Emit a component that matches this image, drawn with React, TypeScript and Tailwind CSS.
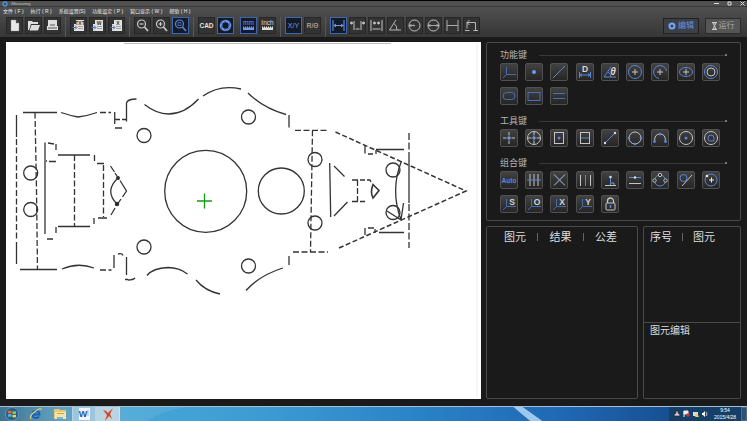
import type { ReactNode } from 'react'
import clsx from 'clsx'

interface Tool {
  label: string
  icon: ReactNode
  active?: boolean
}

const BLUE = '#5b86d6'
const LIGHT = '#c4c4c4'

const menus = ['文件 ( F )', '执行 ( R )', '系统设置(S)', '功能设定 ( P )', '窗口显示 ( W )', '帮助 ( H )']

function Magnifier({ color, children }: { color: string; children?: ReactNode }) {
  return (
    <g fill="none" stroke={color} strokeWidth="1.2">
      <circle cx="7.5" cy="7" r="4" />
      <path d="M10.5 10l3.5 4" strokeWidth="1.7" />
      {children}
    </g>
  )
}

function ExportSheet({ text }: { text: string }) {
  return (
    <>
      <path d="M6 3h8v11H4V7h2z" fill="#e2e2e2" />
      <path d="M8 9.500h5M8 11.500h5" stroke="#888" strokeWidth=".7" />
      <path d="M2.500 10.500h4M5 8.500l2 2-2 2" stroke="#4a76bd" fill="none" />
      <text x="10" y="7.500" fontSize="5" fontWeight="700" textAnchor="middle" fill="#333">{text}</text>
    </>
  )
}

const fileTools: Tool[] = [
  { label: 'New', icon: <path d="M5 3h5l3 3v8H5zM10 3v3h3" fill="#e8e8e8" stroke="#888" strokeWidth=".4" /> },
  { label: 'Open', icon: <path d="M3 13V4h4l1 1h5v2H6l-2 6zM6.500 8H15l-2 5.500H4.500z" fill="#dedede" /> },
  {
    label: 'Save',
    icon: (
      <>
        <path d="M4 3h9v6h1v4H3V9h1z" fill="#dedede" />
        <path d="M6 8h5M4 11h9" stroke="#555" />
      </>
    ),
  },
]

const exportTools: Tool[] = [
  { label: 'Export TXT', icon: <ExportSheet text="TXT" /> },
  { label: 'Export Word', icon: <ExportSheet text="W" /> },
  { label: 'Export Excel', icon: <ExportSheet text="X" /> },
]

const zoomTools: Tool[] = [
  { label: 'Zoom out', icon: <Magnifier color="#c9c9c9"><path d="M5.500 7h4" /></Magnifier> },
  { label: 'Zoom in', icon: <Magnifier color="#c9c9c9"><path d="M5.500 7h4M7.500 5v4" /></Magnifier> },
  { label: 'Zoom window', active: true, icon: <Magnifier color={BLUE}><path d="M6 5.500h3v3H6z" strokeWidth=".7" /></Magnifier> },
]

const viewTools: Tool[] = [
  { label: 'CAD', icon: <text x="8.5" y="11" fontSize="6.500" fontWeight="700" textAnchor="middle" fill="#e0e0e0">CAD</text> },
  {
    label: 'Camera',
    active: true,
    icon: (
      <>
        <circle cx="8.5" cy="8.500" r="4.500" fill="none" stroke="#6d9af0" strokeWidth="2.600" />
        <path d="M6 3l3 2M13 5l-1 4M14 10l-4 2M10 14l-3-2M4 12l1-4M3 7l3-2" stroke="#2b4d8e" strokeWidth=".7" />
      </>
    ),
  },
]

function Ruler({ text, color }: { text: string; color: string }) {
  return (
    <>
      <text x="8.5" y="7.500" fontSize="6.500" textAnchor="middle" fill={color}>{text}</text>
      <path d="M3 9.500h1v1h1v-1h1v1h1v-1h1v1h1v-1h1v1h1v-1h1v1h1v-1h1V13H3z" fill={color} />
    </>
  )
}

const unitTools: Tool[] = [
  { label: 'mm', active: true, icon: <Ruler text="mm" color="#6d9af0" /> },
  { label: 'Inch', icon: <Ruler text="Inch" color="#dddddd" /> },
]

const coordTools: Tool[] = [
  { label: 'X/Y', active: true, icon: <text x="8.5" y="11" fontSize="7" textAnchor="middle" fill="#6d9af0">X/Y</text> },
  { label: 'R/Θ', icon: <text x="8.5" y="11" fontSize="6.500" textAnchor="middle" fill="#c8c8c8">R/Θ</text> },
]

const measureTools: Tool[] = [
  { label: 'Distance', active: true, icon: <path d="M3 3v11M14 3v11M3.500 8.500h10M6 7l-2 1.500L6 10M11 7l2 1.500-2 1.500" fill="none" stroke="#6d9af0" /> },
  {
    label: 'Outer distance',
    icon: (
      <g stroke={LIGHT} fill={LIGHT}>
        <path d="M5 4v9M12 4v9M6.500 12h4" />
        <circle cx="2.500" cy="6" r="1" /><circle cx="14.500" cy="6" r="1" />
      </g>
    ),
  },
  {
    label: 'Inner distance',
    icon: (
      <g stroke={LIGHT} fill={LIGHT}>
        <path d="M3 3v11M14 3v11M4.500 12h8" />
        <circle cx="6.500" cy="6" r="1" /><circle cx="10.500" cy="6" r="1" />
      </g>
    ),
  },
  { label: 'Angle', icon: <path d="M14 13H2.500L9 3M7 6.500q3 2 3 6.500" fill="none" stroke={LIGHT} strokeWidth=".9" /> },
  {
    label: 'Radius',
    icon: <g fill="none" stroke={LIGHT}><circle cx="8.500" cy="8.500" r="5.500" /><path d="M3 8.500h5.500M5.500 7L4 8.500 5.500 10M8 7.500v2" strokeWidth=".8" /></g>,
  },
  {
    label: 'Diameter',
    icon: <g fill="none" stroke={LIGHT}><circle cx="8.500" cy="8.500" r="5.500" /><path d="M3 8.500h11M5.500 7L4 8.500 5.500 10M11.500 7L13 8.500 11.500 10" strokeWidth=".8" /></g>,
  },
  { label: 'Length', icon: <path d="M3 3v11M14 3v11M3 8.500h11" fill="none" stroke="#aaa" /> },
  { label: 'Undo', icon: <path d="M2 13.500h4.500M10.500 13.500H15M12.500 13.500v-8H4M6.500 3L4 5.500 6.500 8M4 5.500v6" fill="none" stroke={LIGHT} strokeWidth=".9" /> },
]

function Axes({ letter }: { letter?: string }) {
  return (
    <>
      <path d="M6.500 4v7.500H16M6.500 11.500L3 15" fill="none" stroke="#456dae" />
      {letter && (
        <text x="12" y="9.500" fontSize="8.500" fontWeight="700" textAnchor="middle" fill="#d4d4d4">{letter}</text>
      )}
    </>
  )
}

const Cross = <path d="M9 6v6M6 9h6" stroke={LIGHT} />

const featureTools: Tool[] = [
  { label: 'Coordinate', icon: <Axes /> },
  { label: 'Point', icon: <circle cx="9" cy="9" r="2" fill="#6d9af0" /> },
  { label: 'Line', icon: <path d="M3 15L15 3" stroke={BLUE} /> },
  {
    label: 'Distance',
    icon: (
      <>
        <path d="M3.500 9v6M14.500 9v6M4 12h10M6 10.500L4 12l2 1.500M12 10.500l2 1.500-2 1.500" fill="none" stroke={BLUE} />
        <text x="9" y="8.500" fontSize="8.500" fontWeight="700" textAnchor="middle" fill="#d8d8d8">D</text>
      </>
    ),
  },
  {
    label: 'Angle',
    icon: (
      <>
        <path d="M15 14H3l7-10M7 9q3 2 3 5" fill="none" stroke={BLUE} />
        <text x="12" y="12" fontSize="10" fontWeight="700" fontStyle="italic" textAnchor="middle" fill="#d8d8d8">θ</text>
      </>
    ),
  },
  { label: 'Circle', icon: <><circle cx="9" cy="9" r="6.500" fill="none" stroke={BLUE} />{Cross}</> },
  { label: 'Arc', icon: <><path d="M8 15.500A6.500 6.500 0 1 1 15.500 8" fill="none" stroke={BLUE} />{Cross}</> },
  { label: 'Ellipse', icon: <><ellipse cx="9" cy="9" rx="6.500" ry="4.500" fill="none" stroke={BLUE} />{Cross}</> },
  { label: 'Ring', icon: <g fill="none"><circle cx="9" cy="9" r="6.500" stroke={BLUE} /><circle cx="9" cy="9" r="4" stroke={LIGHT} /></g> },
  { label: 'Slot', icon: <rect x="3" y="5.500" width="12" height="7" rx="3.500" fill="none" stroke="#4a6fb4" /> },
  { label: 'Rectangle', icon: <rect x="3" y="5.500" width="12" height="8" fill="none" stroke="#4a6fb4" /> },
  { label: 'Parallel lines', icon: <path d="M3 6.500h12M3 11.500h12" stroke="#4a6fb4" /> },
]

const captureTools: Tool[] = [
  {
    label: 'Pick point',
    icon: <><path d="M9 3v3.500M9 11.500V15M3 9h3.500M11.500 9H15" stroke={LIGHT} /><circle cx="9" cy="9" r="1.700" fill="#6d9af0" /></>,
  },
  {
    label: 'Pick in circle',
    icon: (
      <>
        <circle cx="9" cy="9" r="6.500" fill="none" stroke={LIGHT} />
        <path d="M9 3v3.500M9 11.500V15M3 9h3.500M11.500 9H15" stroke={LIGHT} /><circle cx="9" cy="9" r="1.700" fill="#6d9af0" />
      </>
    ),
  },
  { label: 'Box point', icon: <><rect x="4.500" y="3.500" width="9" height="11" fill="none" stroke={LIGHT} /><circle cx="9" cy="9" r="1.500" fill={BLUE} /></> },
  { label: 'Box line', icon: <><rect x="4.500" y="3.500" width="9" height="11" fill="none" stroke={LIGHT} /><path d="M5 9h8" stroke={BLUE} /></> },
  {
    label: 'Two points',
    icon: <><path d="M4 14L14 4" stroke={BLUE} /><g fill="#ddd"><circle cx="4" cy="14" r="1.200" /><circle cx="14" cy="4" r="1.200" /></g></>,
  },
  {
    label: 'Circle points',
    icon: (
      <>
        <circle cx="9" cy="9" r="6" fill="none" stroke={LIGHT} />
        <g fill={BLUE}><circle cx="3" cy="9" r="1.300" /><circle cx="15" cy="9" r="1.300" /><circle cx="9" cy="15" r="1.300" /></g>
      </>
    ),
  },
  {
    label: 'Arc points',
    icon: (
      <>
        <path d="M3.500 12Q3.500 5 9 5t5.500 7" fill="none" stroke={LIGHT} />
        <g fill={BLUE}><circle cx="3.500" cy="12.500" r="1.400" /><circle cx="14.500" cy="12.500" r="1.400" /><circle cx="9" cy="5" r="1.300" /></g>
      </>
    ),
  },
  { label: 'Circle centre', icon: <><circle cx="9" cy="9" r="6.500" fill="none" stroke={LIGHT} /><circle cx="9" cy="9" r="1.500" fill={BLUE} /></> },
  { label: 'Contour', icon: <g fill="none"><circle cx="9" cy="9" r="6.500" stroke={LIGHT} /><path d="M12 12H7Q6 12 6 9t3-3 3 3z" stroke={BLUE} /></g> },
]

const combineTools: Tool[] = [
  { label: 'Auto', icon: <text x="9" y="11.500" fontSize="6.500" fontWeight="700" textAnchor="middle" fill={BLUE}>Auto</text> },
  { label: 'Line group', icon: <><path d="M5 3v12M9 3v12M13 3v12" stroke={LIGHT} /><path d="M2 9h14" stroke={BLUE} /></> },
  { label: 'Intersection', icon: <><path d="M4 3.500L15 14.500M15 3.500L4 14.500" stroke={LIGHT} /><circle cx="9.500" cy="9" r="1.200" fill={BLUE} /></> },
  { label: 'Mid line', icon: <><path d="M4.500 4v11M14.500 4v11" stroke={LIGHT} /><path d="M9.500 4v11" stroke={BLUE} /></> },
  {
    label: 'Perpendicular',
    icon: (
      <>
        <path d="M4 14.500h11" stroke={LIGHT} /><path d="M9.500 6v8" stroke={BLUE} />
        <path d="M10 12h3v2" stroke={LIGHT} fill="none" strokeWidth=".7" /><circle cx="9.500" cy="6" r="1.300" fill="#ddd" />
      </>
    ),
  },
  { label: 'Parallel', icon: <><path d="M3 12.500h12" stroke={LIGHT} /><path d="M3 6.500h12" stroke={BLUE} /><circle cx="9" cy="6.500" r="1.300" fill="#ddd" /></> },
  {
    label: 'Bolt circle',
    icon: (
      <>
        <circle cx="9" cy="9.500" r="5.500" fill="none" stroke={BLUE} />
        <g fill="#2a2a2a" stroke={LIGHT}><circle cx="9" cy="4" r="1.700" /><circle cx="3.500" cy="9.500" r="1.700" /><circle cx="14.500" cy="9.500" r="1.700" /></g>
      </>
    ),
  },
  { label: 'Tangent', icon: <><circle cx="6.500" cy="7" r="3.500" fill="none" stroke={BLUE} /><path d="M5 15L15 4" stroke={LIGHT} /></> },
  {
    label: 'Circle centre offset',
    icon: <><circle cx="9" cy="9" r="6" fill="none" stroke={BLUE} /><circle cx="5" cy="5" r="1.300" fill="#eee" /><path d="M9.500 6.500v5M7 9h5" stroke="#eee" /></>,
  },
  { label: 'Axes S', icon: <Axes letter="S" /> },
  { label: 'Axes O', icon: <Axes letter="O" /> },
  { label: 'Axes X', icon: <Axes letter="X" /> },
  { label: 'Axes Y', icon: <Axes letter="Y" /> },
  {
    label: 'Lock',
    icon: (
      <g fill="none" stroke={LIGHT}>
        <path d="M6.500 8V6a3 3 0 0 1 6 0v2" strokeWidth="1.300" /><rect x="5" y="8" width="9" height="7" rx="1" />
        <path d="M9.500 10v3" stroke={BLUE} strokeWidth="1.500" />
      </g>
    ),
  },
]

function ToolGroup({ tools }: { tools: Tool[] }) {
  return (
    <div className="flex gap-0.5">
      {tools.map((tool) => (
        <button
          key={tool.label}
          aria-label={tool.label}
          className={clsx(
            'size-[17px] border',
            tool.active ? 'border-[#3f66a8] bg-[#141b28]' : 'border-[#272727] bg-[#333333]',
          )}
        >
          <svg viewBox="1 1 15 15" className="size-full">{tool.icon}</svg>
        </button>
      ))}
    </div>
  )
}

function Separator() {
  return <div className="mx-1 h-5 w-px bg-[#585858]" />
}

function ToolSection({ title, tools }: { title: string; tools: Tool[] }) {
  return (
    <section>
      <div className="flex h-3 items-center gap-3">
        <h2 className="text-[9px] leading-3 text-[#b5b5b5]">{title}</h2>
        <div className="flex flex-1 items-center">
          <div className="h-px flex-1 bg-[#383838]" />
          <div className="size-0.5 bg-[#777777]" />
        </div>
      </div>
      <div className="mt-0.5 grid grid-cols-9 gap-y-1.5">
        {tools.map((tool) => (
          <button
            key={tool.label}
            aria-label={tool.label}
            className="size-[18px] rounded-xs border border-[#505050] bg-linear-to-b from-[#424242] to-[#262626]"
          >
            <svg viewBox="1 1 16 16" className="size-full">{tool.icon}</svg>
          </button>
        ))}
      </div>
    </section>
  )
}

function PartDrawing() {
  return (
    <svg viewBox="6 42 475 357" className="size-full" fill="none" stroke="#333" strokeWidth="1.300">
      <path d="M124 43.500H391" stroke="#bbb" strokeWidth="1" />
      <path d="M477 43V398" stroke="#eeeee6" strokeWidth="1" />

      {/* left plate */}
      <path d="M16.500 115v22M16.500 242v22M23 112.500h34M20 269.500h37M100 112.500h6M108.500 112.500h2.500M100 270h6M108.500 270h3" />
      <path d="M16.500 139V241M35 112.500L36.500 190 37.500 269.500" strokeDasharray="6 2.500" />
      <path d="M61 112.500q9 3 17 4.500 9-1 19-4.500M62 269q16-7 32-1" />
      <path d="M114.700 112v12M115 119.500h5M122 119.500h5M115 128h7M126.500 121.500V103q1-4 10-4" />
      <path d="M114 268v-13M118 254q4-1 5 1.500M126.500 257v18M125 279.500h3" />

      {/* stepped shaft */}
      <path d="M45 142.500V234M48 143l6 1M56 144v6M46 161h1M49 161.500h7M56 227v6M47 239h6" />
      <path d="M58 155h32M58 226.500h32M94.500 155v6M94 218v6M97 163.500h7M98 218h9" />
      <path d="M74.500 155v71M103.500 165v52" strokeDasharray="6 2.500" />
      <path d="M110.500 166l4 6M115 173l4 6M120 180.500l6.500 10.500-4 6M121 199l-4 6M115 208l-4 7M118 178q-14 13-1 26" />
      <circle cx="118" cy="178" r="1.300" fill="#222" />
      <circle cx="117" cy="204" r="1.600" fill="#222" />

      {/* body outline */}
      <path d="M144.500 104.500q12 9.500 24 9.500 16 0 30-15M203 96q17-12 38-7M248 93q15 15 38 21.500M289 115v12.500" />
      <path d="M128 280q5 0 7-2M147 275.500Q153 268 168 267.500q11 0 19.500 6.500M196 280q9 11 24 14M246 290.500Q260 275 283 268M289 256v9" />

      <circle cx="144" cy="135.500" r="7" />
      <circle cx="144" cy="247" r="7" />
      <circle cx="30.700" cy="173" r="7" />
      <circle cx="30.700" cy="209.500" r="7" />
      <circle cx="248.500" cy="117" r="7" />
      <circle cx="248.500" cy="266" r="7" />
      <circle cx="205.700" cy="191.300" r="41" />
      <circle cx="281.300" cy="191" r="23" />
      <circle cx="315" cy="159.500" r="7" />
      <circle cx="315" cy="223" r="7" />
      <circle cx="393" cy="170" r="7" />
      <circle cx="393" cy="212.500" r="7" />

      {/* nose cone */}
      <path d="M295 130.300h34M293 252h35M312.500 130.300l-1 60-1 61.700" strokeDasharray="6 2.500" />
      <path d="M335.500 132L466 191 339 248" strokeDasharray="5 2.500" strokeWidth="1.500" />
      <path d="M409 133v20M409 204v44" strokeDasharray="7 2.500" />
      <path d="M409 153v50M376 149.500h28M379 232.500h25" />
      <path d="M365 145v8.500M368 154h5M376 154v-4M365 235v-7M368 228h6M375 229v4" />
      <path d="M329.700 163l.5 27 .5 27M334 166l10.500 10.500M334 216l13.500-14" />
      <path d="M352 180h13M367 180h3l1 2M357.500 180v21M352 201.500h13" strokeDasharray="6 2" />
      <path d="M373 184.500l6 6-6 7.500q-3-6 0-13.500z" strokeWidth="1.600" />
      <path d="M401.500 161Q390 190 401 220M387 211l14 9M403.500 203l-2.500 17" />

      <path d="M197 201h15M204.500 193.500v15" stroke="#159a15" />
    </svg>
  )
}

function Taskbar() {
  return (
    <footer className="flex h-[15px] items-center border-t border-[#a8bdd0] bg-[linear-gradient(90deg,#3d7492_0%,#64a2c2_8%,#46a5d6_18%,#3d9dd3_34%,#2a84c7_55%,#1f68b5_75%,#174f90_90%)]">
      <nav className="flex h-full items-center">
        <button aria-label="Start" className="flex w-6 justify-center">
          <svg viewBox="0 0 14 14" className="size-[14px]">
            <circle cx="7" cy="7" r="6.500" fill="#285f87" stroke="#5f93b2" />
            <path d="M3 4q2-1 3.500 0v2.500Q5 5.500 3 6.500z" fill="#f06535" />
            <path d="M7.500 4q2 1 3.500 0v2.500q-2 1-3.500 0z" fill="#9ccc4b" />
            <path d="M3 7.500q2-1 3.500 0V10Q5 9 3 10z" fill="#5ab2e8" />
            <path d="M7.500 7.500q2 1 3.500 0V10q-2 1-3.500 0z" fill="#f5cf44" />
          </svg>
        </button>
        <button aria-label="Internet Explorer" className="flex w-6 justify-center">
          <svg viewBox="0 0 14 14" className="size-[14px]" fill="none">
            <path d="M3.500 7.500h7Q10.500 4 7 4T3.500 7.500 7 11q2 0 3-1.500" stroke="#1263bb" strokeWidth="1.800" />
            <path d="M2 12Q0 9 6 4.500T12.500 3" stroke="#f0cf61" strokeWidth="1.100" />
          </svg>
        </button>
        <button aria-label="Explorer" className="flex w-6 justify-center">
          <svg viewBox="0 0 14 14" className="size-[14px]">
            <path d="M1 2h5l1 1h6v9H1z" fill="#e8c974" />
            <path d="M2 5h11v7H2z" fill="#f5e6a5" />
            <path d="M4 10h6v2H4z" fill="#7ab5d8" />
            <path d="M4 6.500h7" stroke="#c9a44c" />
          </svg>
        </button>
        <button aria-label="Word" className="flex h-[14px] w-6 justify-center border-x border-[#b5d4e5] bg-[#9bc7de]">
          <svg viewBox="0 0 14 14" className="size-[14px]">
            <rect x="2" y="1" width="11" height="12" fill="#f3f6fa" />
            <path d="M10 4h2M10 6h2M10 8h2" stroke="#8ba5ca" strokeWidth=".8" />
            <text x="6" y="10" fontSize="9" fontWeight="700" textAnchor="middle" fill="#2754a5">W</text>
          </svg>
        </button>
        <button aria-label="iMeasuring" className="flex h-[14px] w-6 justify-center border-r border-[#cfe3ee] bg-[#b9d5e3]">
          <svg viewBox="0 0 14 14" className="size-[14px]">
            <path d="M2 3l3 1 2 2 5-5-3 6 2 5-3-3-4 5 2-6z" fill="#d9441e" />
          </svg>
        </button>
      </nav>
      <svg viewBox="0 0 360 14" preserveAspectRatio="none" className="h-full min-w-0 flex-1">
        <path d="M18 14Q26 4 45 0H0v14z" fill="#fff" opacity=".08" />
        <path d="M258 0h6l13 14h-8z" fill="#b5d8f8" opacity=".85" />
      </svg>
      <div className="flex h-full items-center gap-0.5 bg-[#153f68] pl-1 text-white">
        <svg viewBox="0 0 36 8" className="h-2 w-9">
          <path d="M1 6q0-2 2-3V1h2v2q2 1 2 3z" fill="#ccc" stroke="#222" strokeWidth=".6" />
          <path d="M11 1h4v3h-4zM11 1v6" fill="#eee" stroke="#eee" /><circle cx="15" cy="5" r="1.800" fill="#c93636" />
          <path d="M20 2h5v4h-5z" fill="#ddd" /><path d="M24 3l2 4h-4z" fill="#f0d040" />
          <path d="M29 3h1l2-2v6l-2-2h-1z" fill="#fff" /><path d="M33 2q2 2 0 4" stroke="#fff" fill="none" strokeWidth=".7" />
        </svg>
        <div className="w-7 text-center text-[5px] leading-[7px]">
          <div>9:54</div>
          <div>2015/4/28</div>
        </div>
        <button aria-label="Show desktop" className="h-[14px] w-1.5 border border-[#4d6f8e] bg-[#2c5377]" />
      </div>
    </footer>
  )
}

export default function App() {
  return (
    <div className="flex min-h-screen flex-col border-t border-black bg-[#1a1a1a] font-['Liberation_Sans','Noto_Sans_CJK_SC',sans-serif]">
      <header className="bg-linear-to-b from-[#555555] to-[#363636]">
        <div className="flex h-1.5 items-center justify-between border-b border-[#3a3a3a] bg-[#505050] px-0.5">
          <div className="flex items-center gap-[3px] text-[4px] leading-[5px] text-[#c8c8c8]">
            <svg viewBox="0 0 6 6" className="size-1.5">
              <circle cx="3" cy="3" r="2" fill="none" stroke="#4f8fdd" strokeWidth="1.400" />
            </svg>
            <span>iMeasuring</span>
          </div>
          <div className="flex gap-2">
            <button aria-label="Minimize" className="block">
              <svg viewBox="0 0 5 5" className="size-[5px]"><path d="M0 2.500h5" stroke="#ddd" /></svg>
            </button>
            <button aria-label="Maximize" className="block">
              <svg viewBox="0 0 5 5" className="size-[5px]"><path d="M1 1h3v3H1z" stroke="#ddd" fill="none" /></svg>
            </button>
            <button aria-label="Close" className="block">
              <svg viewBox="0 0 5 5" className="size-[5px]"><path d="M.5.500l4 4M4.500.500l-4 4" stroke="#ddd" /></svg>
            </button>
          </div>
        </div>

        <nav className="flex h-[9px] items-center gap-[7px] px-[3px] text-[5px] leading-[9px] text-[#eeeeee]">
          {menus.map((menu) => (
            <button key={menu} className="whitespace-nowrap">{menu}</button>
          ))}
        </nav>

        <div className="flex h-[21px] items-start px-1.5 pt-px">
          <ToolGroup tools={fileTools} />
          <Separator />
          <ToolGroup tools={exportTools} />
          <Separator />
          <ToolGroup tools={zoomTools} />
          <Separator />
          <div className="flex gap-1.5">
            <ToolGroup tools={viewTools} />
            <ToolGroup tools={unitTools} />
          </div>
          <Separator />
          <ToolGroup tools={coordTools} />
          <Separator />
          <ToolGroup tools={measureTools} />

          <div className="ml-auto flex gap-1.5 pt-px text-[8px] leading-3">
            <button className="flex h-4 w-9 items-center justify-center gap-0.5 border border-[#222222] bg-[#3b3f48] text-[#6592e4]">
              <svg viewBox="0 0 8 8" className="size-2 shrink-0">
                <circle cx="4" cy="4" r="2.500" fill="none" stroke="#78a5f5" strokeWidth="2" />
              </svg>
              <span className="whitespace-nowrap">编辑</span>
            </button>
            <button className="flex h-4 w-9 items-center justify-center gap-0.5 border border-[#2c2c2c] bg-[#555555] text-[#a8a8a8]">
              <svg viewBox="0 0 5 8" className="h-2 w-[5px] shrink-0">
                <path d="M0 .5h5M0 7.500h5M1 1l3 6H1l3-6z" fill="none" stroke="#ccc" />
              </svg>
              <span className="whitespace-nowrap">运行</span>
            </button>
          </div>
        </div>
      </header>

      <main className="flex flex-1 gap-[5px] px-1.5 pt-[5px] pb-[7px]">
        <div className="min-w-0 flex-1 bg-white">
          <PartDrawing />
        </div>

        <aside className="flex w-[255px] shrink-0 flex-col gap-[5px]">
          <div className="flex flex-col gap-2.5 rounded-xs border border-[#4a4a4a] px-[13px] pt-1.5 pb-[7px]">
            <ToolSection title="功能键" tools={featureTools} />
            <ToolSection title="工具键" tools={captureTools} />
            <ToolSection title="组合键" tools={combineTools} />
          </div>

          <div className="flex flex-1 gap-[5px] text-[11px] leading-4 text-[#dedede]">
            <section className="flex-1 rounded-xs border border-[#4a4a4a] pt-0.5">
              <div className="flex items-center justify-between pr-5 pl-[17px]">
                <span>图元</span>
                <span className="h-2 w-px bg-[#666666]" />
                <span>结果</span>
                <span className="h-2 w-px bg-[#666666]" />
                <span>公差</span>
              </div>
            </section>
            <section className="flex w-[98px] flex-col rounded-xs border border-[#4a4a4a]">
              <div className="flex flex-5 items-start pt-0.5 pl-1.5">
                <div className="flex items-center gap-2.5">
                  <span>序号</span>
                  <span className="h-2 w-px bg-[#666666]" />
                  <span>图元</span>
                </div>
              </div>
              <div className="flex-4 border-t border-[#4a4a4a] pl-1.5 text-[10px]">图元编辑</div>
            </section>
          </div>
        </aside>
      </main>

      <Taskbar />
    </div>
  )
}
